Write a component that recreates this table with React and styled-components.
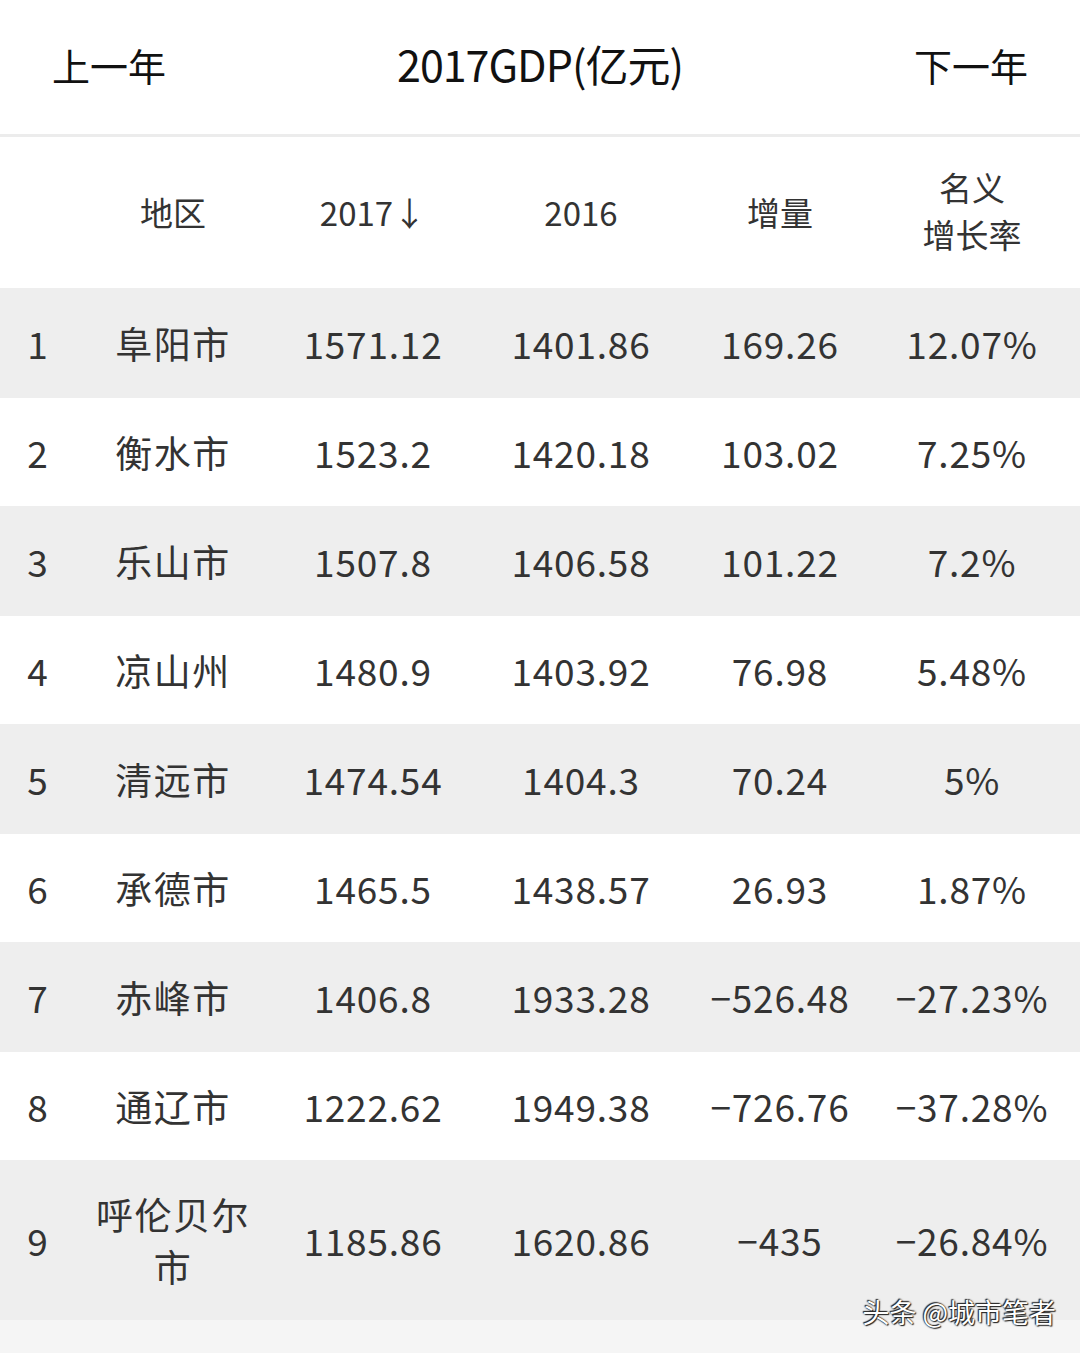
import React from "react";
import styled, { createGlobalStyle } from "styled-components";

const GlobalStyle = createGlobalStyle`
  html, body {
    margin: 0;
    padding: 0;
    background: #ffffff;
  }
  body {
    font-family: "Noto Sans", "Noto Sans CJK SC", sans-serif;
  }
`;

const Page = styled.div`
  width: 1080px;
  height: 1353px;
  overflow: hidden;
  background: #f5f5f5;
  position: relative;
`;

const TopBar = styled.div`
  height: 134px;
  display: flex;
  align-items: center;
  justify-content: space-between;
  padding: 0 52px;
  background: #ffffff;
  border-bottom: 3px solid #ececec;
  color: #111;
`;

const NavLink = styled.span`
  font-size: 38px;
  font-family: "Noto Sans CJK SC", sans-serif;
  margin-top: -6px;
`;

const Title = styled.span`
  font-size: 43px;
  font-family: "Noto Sans CJK SC", sans-serif;
  letter-spacing: -1px;
  margin-top: -8px;
`;

const Grid = styled.div`
  display: grid;
  grid-template-columns: 76px 194px 206px 210px 188px 196px;
  align-items: center;
  height: ${(p) => p.$h}px;
  background: ${(p) => p.$bg};
  color: #333;
  padding-right: 10px;
`;

const HeadCell = styled.div`
  text-align: center;
  font-size: 33px;
  line-height: 47px;
  font-family: "Noto Sans CJK SC", sans-serif;
  margin-top: ${(p) => (p.$two ? "-4px" : "0")};
`;

const Cell = styled.div`
  text-align: center;
  font-size: 37px;
  line-height: 52px;
  font-family: "Noto Sans CJK SC", sans-serif;
  letter-spacing: 0.8px;
`;

const Rank = styled(Cell)`
  text-align: center;
`;

const Region = styled(Cell)`
  padding: 0 16px;
  letter-spacing: 1.5px;
`;

const Watermark = styled.div`
  position: absolute;
  right: 24px;
  bottom: 22px;
  font-size: 27px;
  font-family: "Noto Sans CJK SC", sans-serif;
  color: #ffffff;
  text-shadow: 0 0 2px #222, 1px 1px 1px #222, -1px -1px 1px #222;
`;

const rows = [
  ["1", "阜阳市", "1571.12", "1401.86", "169.26", "12.07%"],
  ["2", "衡水市", "1523.2", "1420.18", "103.02", "7.25%"],
  ["3", "乐山市", "1507.8", "1406.58", "101.22", "7.2%"],
  ["4", "凉山州", "1480.9", "1403.92", "76.98", "5.48%"],
  ["5", "清远市", "1474.54", "1404.3", "70.24", "5%"],
  ["6", "承德市", "1465.5", "1438.57", "26.93", "1.87%"],
  ["7", "赤峰市", "1406.8", "1933.28", "-526.48", "-27.23%"],
  ["8", "通辽市", "1222.62", "1949.38", "-726.76", "-37.28%"],
  ["9", "呼伦贝尔市", "1185.86", "1620.86", "-435", "-26.84%"],
];

const heights = [110, 108, 110, 108, 110, 108, 110, 108, 160];

export default function App() {
  return (
    <Page>
      <GlobalStyle />
      <TopBar>
        <NavLink>上一年</NavLink>
        <Title>2017GDP(亿元)</Title>
        <NavLink>下一年</NavLink>
      </TopBar>
      <Grid $h={151} $bg="#ffffff">
        <HeadCell />
        <HeadCell>地区</HeadCell>
        <HeadCell>2017↓</HeadCell>
        <HeadCell>2016</HeadCell>
        <HeadCell>增量</HeadCell>
        <HeadCell $two>
          名义
          <br />
          增长率
        </HeadCell>
      </Grid>
      {rows.map((r, i) => (
        <Grid key={r[0]} $h={heights[i]} $bg={i % 2 === 0 ? "#eeeeee" : "#ffffff"}>
          <Rank>{r[0]}</Rank>
          <Region>{r[1]}</Region>
          <Cell>{r[2]}</Cell>
          <Cell>{r[3]}</Cell>
          <Cell>{r[4].replace("-", "−")}</Cell>
          <Cell>{r[5].replace("-", "−")}</Cell>
        </Grid>
      ))}
      <Watermark>头条 @城市笔者</Watermark>
    </Page>
  );
}
